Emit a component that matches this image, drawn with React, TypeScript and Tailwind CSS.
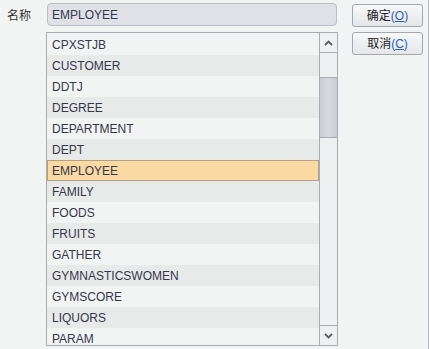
const tables = [
  'CPXSTJB', 'CUSTOMER', 'DDTJ', 'DEGREE', 'DEPARTMENT', 'DEPT', 'EMPLOYEE',
  'FAMILY', 'FOODS', 'FRUITS', 'GATHER', 'GYMNASTICSWOMEN', 'GYMSCORE', 'LIQUORS', 'PARAM',
];

const font = { fontFamily: '"Liberation Sans", Arial, "Noto Sans CJK SC", sans-serif' };

function Btn({ label, hot }: { label: string; hot: string }) {
  return (
    <button className="h-[23px] w-[71px] rounded-[3px] border border-[#a3a8ae] bg-gradient-to-b from-[#f7f8f9] to-[#e4e6e9] text-[12px] text-[#222] flex items-center justify-center">
      {label}
      <span className="text-[#2b62b8]">(<span className="underline">{hot}</span>)</span>
    </button>
  );
}

function Chevron({ up }: { up?: boolean }) {
  return (
    <svg width="9" height="6" viewBox="0 0 9 6" className={up ? '' : 'rotate-180'}>
      <path d="M1 5 L4.5 1.5 L8 5" fill="none" stroke="#5a5e64" strokeWidth="1.8" />
    </svg>
  );
}

export default function App() {
  const selected = 'EMPLOYEE';
  return (
    <div style={font} className="w-[429px] h-[349px] bg-[#f2f3f3] flex border-r border-[#b9bcbf] overflow-hidden text-[12px] text-[#34384a]">
      <div className="w-[46px] pl-[7px] pt-[7px] text-[#333]">名称</div>
      <div className="w-[292px] flex flex-col">
        <div className="ml-[1px] mt-[3px] h-[23px] w-[290px] rounded-[4px] border border-[#bcc0c6] bg-[#dfe1e6] pl-[4px] flex items-center">
          EMPLOYEE
        </div>
        <div className="mt-[6px] h-[314px] border border-[#a7adb3] flex overflow-hidden">
          <div className="flex-1 pt-[1px]">
            {tables.map((t, i) => (
              <div
                key={t}
                className={
                  'h-[21px] pl-[4px] flex items-center border ' +
                  (t === selected
                    ? 'bg-[#fad9a3] border-[#b3a183]'
                    : i % 2 === 0
                    ? 'bg-[#f2f3f3] border-transparent'
                    : 'bg-[#e8e9e9] border-transparent')
                }
              >
                {t}
              </div>
            ))}
          </div>
          <div className="w-[18px] pt-[1px] flex flex-col border-l border-[#a7adb3] bg-[#eef0f1]">
            <div className="h-[19px] border-b border-[#a7adb3] flex items-center justify-center">
              <Chevron up />
            </div>
            <div className="flex-1 flex flex-col">
              <div className="h-[24px]" />
              <div className="h-[61px] border-y border-[#a7adb3] bg-gradient-to-r from-[#c9cdd3] via-[#d6dadf] to-[#c9cdd3]" />
            </div>
            <div className="h-[20px] border-t border-[#a7adb3] flex items-center justify-center">
              <Chevron />
            </div>
          </div>
        </div>
      </div>
      <div className="ml-[14px] pt-[4px] flex flex-col gap-[5px]">
        <Btn label="确定" hot="O" />
        <Btn label="取消" hot="C" />
      </div>
    </div>
  );
}
